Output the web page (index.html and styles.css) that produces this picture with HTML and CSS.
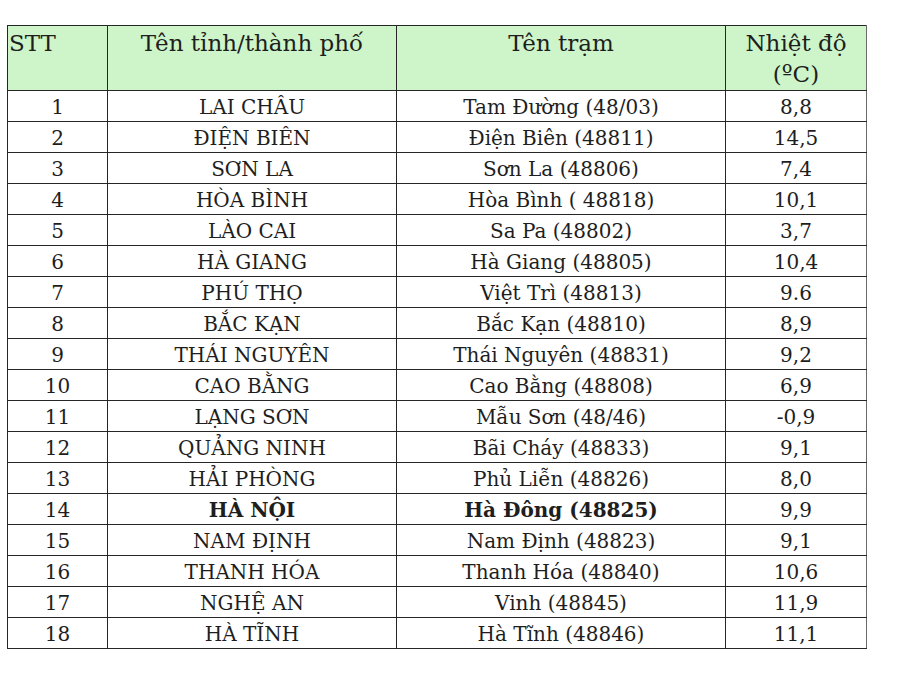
FILE: index.html
```html
<!DOCTYPE html>
<html lang="vi">
<head>
<meta charset="utf-8">
<link rel="stylesheet" href="styles.css">
</head>
<body>
<table class="data">
  <colgroup>
    <col class="c1"><col class="c2"><col class="c3"><col class="c4">
  </colgroup>
  <thead>
    <tr>
      <th class="stt">STT</th>
      <th>Tên tỉnh/thành phố</th>
      <th>Tên trạm</th>
      <th>Nhiệt độ<br>(ºC)</th>
    </tr>
  </thead>
  <tbody>
    <tr><td>1</td><td>LAI CHÂU</td><td>Tam Đường (48/03)</td><td>8,8</td></tr>
    <tr><td>2</td><td>ĐIỆN BIÊN</td><td>Điện Biên (48811)</td><td>14,5</td></tr>
    <tr><td>3</td><td>SƠN LA</td><td>Sơn La (48806)</td><td>7,4</td></tr>
    <tr><td>4</td><td>HÒA BÌNH</td><td>Hòa Bình ( 48818)</td><td>10,1</td></tr>
    <tr><td>5</td><td>LÀO CAI</td><td>Sa Pa (48802)</td><td>3,7</td></tr>
    <tr><td>6</td><td>HÀ GIANG</td><td>Hà Giang (48805)</td><td>10,4</td></tr>
    <tr><td>7</td><td>PHÚ THỌ</td><td>Việt Trì (48813)</td><td>9.6</td></tr>
    <tr><td>8</td><td>BẮC KẠN</td><td>Bắc Kạn (48810)</td><td>8,9</td></tr>
    <tr><td>9</td><td>THÁI NGUYÊN</td><td>Thái Nguyên (48831)</td><td>9,2</td></tr>
    <tr><td>10</td><td>CAO BẰNG</td><td>Cao Bằng (48808)</td><td>6,9</td></tr>
    <tr><td>11</td><td>LẠNG SƠN</td><td>Mẫu Sơn (48/46)</td><td>-0,9</td></tr>
    <tr><td>12</td><td>QUẢNG NINH</td><td>Bãi Cháy (48833)</td><td>9,1</td></tr>
    <tr><td>13</td><td>HẢI PHÒNG</td><td>Phủ Liễn (48826)</td><td>8,0</td></tr>
    <tr class="hl"><td>14</td><td>HÀ NỘI</td><td>Hà Đông (48825)</td><td>9,9</td></tr>
    <tr><td>15</td><td>NAM ĐỊNH</td><td>Nam Định (48823)</td><td>9,1</td></tr>
    <tr><td>16</td><td>THANH HÓA</td><td>Thanh Hóa (48840)</td><td>10,6</td></tr>
    <tr><td>17</td><td>NGHỆ AN</td><td>Vinh (48845)</td><td>11,9</td></tr>
    <tr><td>18</td><td>HÀ TĨNH</td><td>Hà Tĩnh (48846)</td><td>11,1</td></tr>
  </tbody>
</table>
</body>
</html>
```
FILE: styles.css
```css
html, body {
  margin: 0;
  padding: 0;
  background: #ffffff;
}
body {
  padding: 25px 0 0 7px;
  font-family: "DejaVu Serif", "Liberation Serif", serif;
  color: #1e1e1e;
}
.data {
  border-collapse: collapse;
  table-layout: fixed;
  width: 859px;
  font-size: 20px;
}
.c1 { width: 100px; }
.c2 { width: 289px; }
.c3 { width: 329px; }
.c4 { width: 141px; }
.data th, .data td {
  border: 1px solid #262626;
  padding: 0;
  text-align: center;
  font-weight: normal;
}
.data th {
  background: #cdf5c9;
  height: 64px;
  vertical-align: top;
  font-size: 23px;
  line-height: 31px;
  padding-top: 2px;
  box-sizing: border-box;
}
.data th.stt {
  text-align: left;
  padding-left: 1px;
}
.data th:last-child, .data td:last-child {
  border-right-color: #6a6a6a;
}
.data td {
  height: 31px;
  line-height: 27px;
  box-sizing: border-box;
  padding-top: 3px;
  vertical-align: top;
}
.data tr.hl td:nth-child(2), .data tr.hl td:nth-child(3) {
  font-weight: bold;
}
```
